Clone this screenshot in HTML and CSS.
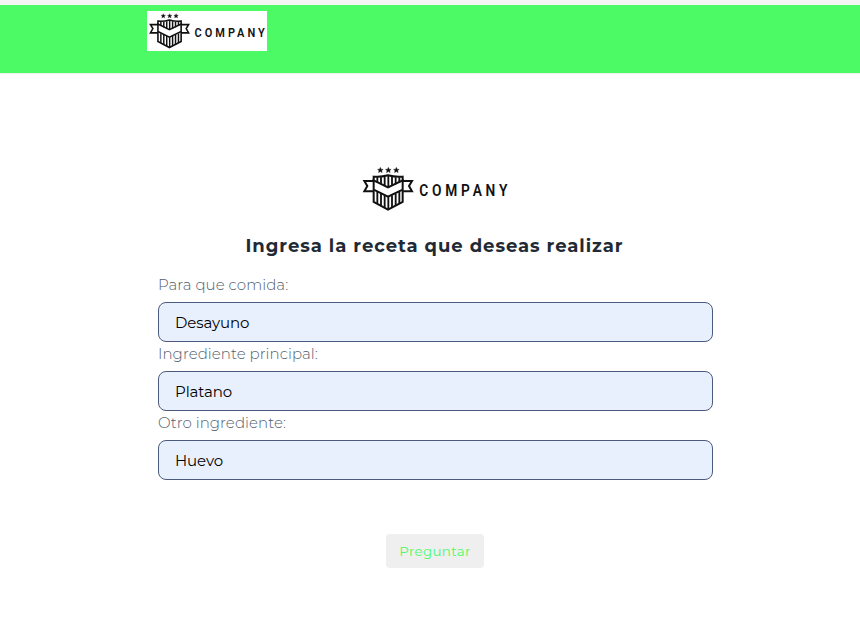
FILE: index.html
```html
<!DOCTYPE html>
<html lang="es">
<head>
<meta charset="utf-8">
<title>Recetas</title>
<link rel="stylesheet" href="styles.css">
</head>
<body>
<svg class="defs" aria-hidden="true">
  <symbol id="logo" viewBox="15 13 450 150">
    <g fill="#111" stroke="#111" stroke-width="1">
      <path id="star" d="M76 23l2.500 5.500 6 .5-4.500 4 1.500 6-5.500-3.200-5.500 3.200 1.500-6-4.500-4 6-.5z"/>
      <use href="#star" x="24"/>
      <use href="#star" x="48"/>
    </g>
    <g fill="none" stroke="#111" stroke-width="6">
      <path d="M56 64V51Q78 53 99 47Q121 53 143 51V64"/>
      <path d="M67 53V69M78 53V74M89 51V79M100 49V84M111 51V79M122 53V74M133 53V69" stroke-width="5.500"/>
      <path d="M56 62L99 83L143 62V90L99 111L56 90Z"/>
      <path d="M56 64H28L37 79L28 95H56M143 64H171L162 79L171 95H143"/>
      <path d="M56 92V127L99 150L143 127V92"/>
      <path d="M67 97V132M78 102V138M89 107V144M100 111V149M111 107V144M122 102V138M133 97V132" stroke-width="5.500"/>
    </g>
    <g transform="translate(193 110) scale(.86 1)">
      <text class="wordmark" x="0" y="0" textLength="307" lengthAdjust="spacing">COMPANY</text>
    </g>
  </symbol>
</svg>
<header class="topbar">
  <svg class="topbar-logo" role="img" aria-label="Company"><use href="#logo"/></svg>
</header>
<main class="content">
  <svg class="logo" role="img" aria-label="Company"><use href="#logo"/></svg>
  <h1>Ingresa la receta que deseas realizar</h1>
  <form>
    <label for="comida">Para que comida:</label>
    <input id="comida" type="text" value="Desayuno">
    <label for="principal">Ingrediente principal:</label>
    <input id="principal" type="text" value="Platano">
    <label for="otro">Otro ingrediente:</label>
    <input id="otro" type="text" value="Huevo">
    <button type="button">Preguntar</button>
  </form>
</main>
</body>
</html>
```
FILE: styles.css
```css
* { box-sizing: border-box; }
body {
  margin: 0;
  background: #fff;
  font-family: Montserrat, Inter, sans-serif;
}
.defs { position: absolute; width: 0; height: 0; }
.wordmark {
  font-family: Roboto, sans-serif;
  font-size: 48px;
  font-weight: 600;
  fill: #111;
}
.topbar {
  height: 74px;
  padding: 6px 147px 0;
  border-top: 5px solid #f4f4f4;
  border-bottom: 1px solid #e9f3ea;
  background: #4bfa64;
}
.topbar-logo { display: block; width: 120px; height: 40px; background: #fff; }
.content { width: 555px; margin: 90px 0 0 158px; }
.logo { display: block; width: 150px; height: 50px; margin: 0 0 0 202px; }
h1 {
  margin: 18px 2px 0 0;
  color: #212934;
  font-size: 18px;
  font-weight: 700;
  line-height: 28px;
  letter-spacing: .96px;
  text-align: center;
  white-space: nowrap;
}
form { display: flex; flex-direction: column; margin-top: 13px; }
label {
  height: 29px;
  color: #4f5d6e;
  font-size: 15px;
  font-weight: 300;
  line-height: 24px;
  letter-spacing: .05px;
}
input {
  width: 100%;
  height: 40px;
  padding: 0 16px;
  border: 1px solid #4c5a80;
  border-radius: 8px;
  background: #e8f0fe;
  color: #000;
  font: 400 15px Montserrat, Inter, sans-serif;
  letter-spacing: -.1px;
}
button {
  width: 98px;
  height: 34px;
  margin: 54px 0 0 228px;
  padding: 0;
  border: 0;
  border-radius: 4px;
  background: #efefef;
  color: #4bfa64;
  font: 400 13.333px Montserrat, Inter, sans-serif;
  letter-spacing: .4px;
}
```
